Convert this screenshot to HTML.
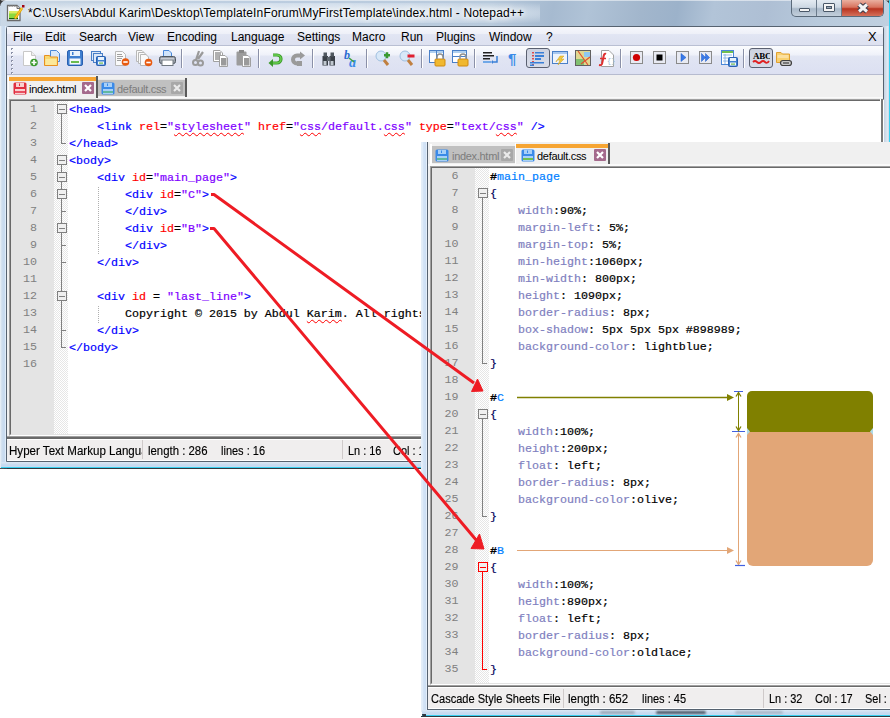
<!DOCTYPE html><html><head><meta charset="utf-8"><style>
*{margin:0;padding:0;box-sizing:border-box}
html,body{width:890px;height:718px;overflow:hidden;background:#fff;position:relative;font-family:"Liberation Sans",sans-serif}
.a{position:absolute}
.title{left:28px;top:6px;font-size:12px;letter-spacing:0.15px;color:#000;white-space:nowrap;text-shadow:0 0 5px #fff,0 0 7px #fff,0 0 9px #f4f8fc}
.menu span{position:absolute;top:3px;font-size:12px;color:#000;white-space:nowrap}
.code{font-family:"Liberation Mono",monospace;font-size:11.67px;white-space:pre;line-height:17px;color:#000;-webkit-text-stroke:0.2px}
.ln{font-family:"Liberation Mono",monospace;font-size:11.67px;color:#808080;text-align:right;line-height:17px;white-space:pre}
.t{color:#0000ff}.at{color:#ff0000}.v{color:#8000ff}
.pr{color:#8080c0}.b{font-weight:bold}.id{color:#0080ff}.op{color:#000058}
.sq{text-decoration:underline wavy #ff0000;text-decoration-thickness:1px;text-underline-offset:2px}
.checker{background-color:#f3f3f3;background-image:repeating-conic-gradient(#e6e6e6 0 25%,#ffffff 0 50%);background-size:2px 2px}
.stbg{background:#f0eeee}
.st{font-size:12.5px;color:#000;white-space:nowrap;line-height:14px;-webkit-text-stroke:0.15px;transform:scaleX(0.92);transform-origin:0 0}
.tabtxt{font-size:11px;letter-spacing:-0.3px;white-space:nowrap;line-height:13px}
</style></head><body>
<div class="a" style="left:0px;top:0px;width:6px;height:6px;background:#3a3a3a"></div>
<div class="a" style="left:883px;top:0px;width:7px;height:6px;background:#3a3a3a"></div>
<div class="a" style="left:0px;top:462px;width:6px;height:7px;background:#505050"></div>
<div class="a" style="left:0px;top:0px;width:890px;height:469px;background:#c4d4e4;border-radius:7px 7px 0 7px;border-bottom:1px solid #303840"></div>
<div class="a" style="left:1px;top:0px;width:888px;height:26px;border-radius:7px 7px 0 0;background:linear-gradient(100deg,#cad8e6 0%,#c4d3e2 10%,#bccde0 30%,#b8cadc 55%,#a6bad0 62%,#b0c3d7 66%,#a2b6cc 72%,#9cb2ca 76%,#b2c4d8 80%,#aebfd4 86%,#b8cadc 92%,#c0d0e0 100%)"></div>
<div class="a" style="left:20px;top:3px;width:520px;height:20px;background:radial-gradient(ellipse at center,rgba(240,246,252,0.75) 0%,rgba(240,246,252,0.5) 60%,rgba(240,246,252,0) 100%)"></div>
<div class="a" style="left:1px;top:0px;width:888px;height:1px;background:rgba(255,255,255,0.5);border-radius:7px 7px 0 0"></div>
<div class="a" style="left:0px;top:26px;width:6px;height:442px;background:linear-gradient(90deg,#f0f5fa 0,#d8e4f0 18%,#c8daee 50%,#cadcf0 75%,#eaf3fc 100%)"></div>
<div class="a" style="left:1px;top:462px;width:889px;height:5px;background:linear-gradient(#dde9f5,#c6daf0 60%,#c8dcf2)"></div>
<div class="a" style="left:1px;top:467px;width:889px;height:1px;background:#38d0f0"></div>
<div class="a" style="left:884px;top:26px;width:5px;height:441px;background:linear-gradient(90deg,#c5d3e3,#dfe8f2 70%,#c8d8e8)"></div>
<div class="a" style="left:889px;top:0px;width:1px;height:468px;background:#36d2f2"></div>
<svg class="a" style="left:6px;top:4px" width="20" height="18" viewBox="0 0 20 18" ><path d="M1.5 1.5 H11 L14 4.5 V16.5 H1.5 Z" fill="#fff" stroke="#6a6a6a" stroke-width="1.3"/><path d="M11 1.5 V4.5 H14" fill="#e0e0e0" stroke="#6a6a6a" stroke-width="1"/><rect x="3" y="1" width="1.5" height="1.5" fill="#777"/><rect x="5.5" y="1" width="1.5" height="1.5" fill="#777"/><rect x="8" y="1" width="1.5" height="1.5" fill="#777"/><rect x="3" y="7" width="9" height="8" fill="#8ad840"/><rect x="3" y="7" width="9" height="2.5" fill="#d8ec60"/><rect x="3" y="14" width="9" height="1.2" fill="#106010"/><path d="M9 14.5 L16 4" stroke="#e8a800" stroke-width="2.6"/><path d="M9 14.5 L16 4" stroke="#ffd040" stroke-width="1"/><rect x="16" y="1" width="2.5" height="2.5" fill="#a00010"/></svg>
<div class="a title">*C:\Users\Abdul Karim\Desktop\TemplateInForum\MyFirstTemplate\index.html - Notepad++</div>
<div class="a" style="left:791px;top:0;width:93px;height:17px;border:1px solid #5a6a7a;border-top:none;border-radius:0 0 5px 5px;overflow:hidden;background:linear-gradient(#e4ebf2,#cdd8e3 45%,#a9b9c9 55%,#c3cfdb)">
  <div class="a" style="left:50px;top:0;width:42px;height:16px;background:linear-gradient(#eab0a0,#d8735e 45%,#b83420 55%,#d5705a)"></div>
  <div class="a" style="left:24px;top:0;width:1px;height:16px;background:#6a7a8a"></div>
  <div class="a" style="left:49px;top:0;width:1px;height:16px;background:#6a7a8a"></div>
  <div class="a" style="left:7px;top:8px;width:11px;height:4px;background:#f4f4f4;border:1px solid #4a5868;border-radius:1px"></div>
  <div class="a" style="left:31px;top:3px;width:12px;height:9px;background:#f4f4f4;border:1px solid #4a5868;border-radius:1px"><div class="a" style="left:2px;top:2px;width:6px;height:3px;background:#98a6b6;border:1px solid #4a5868"></div></div>
  <svg class="a" style="left:64px;top:2px" width="14" height="13" viewBox="0 0 14 13"><path d="M3 2.5 L11 9.5 M11 2.5 L3 9.5" stroke="#3a3a48" stroke-width="5"/><path d="M3 2.5 L11 9.5 M11 2.5 L3 9.5" stroke="#f4f4f4" stroke-width="3"/></svg>
</div>
<div class="a" style="left:6px;top:26px;width:878px;height:436px;border:1px solid #566270;border-radius:3px 3px 0 0;background:#f0f0f0"></div>
<div class="a menu" style="left:7px;top:27px;width:876px;height:19px;background:linear-gradient(#f6f7fc 0%,#eef0f8 38%,#e1e5f3 42%,#dde1f0 100%);border-bottom:1px solid #b9bfd3">
<span style="left:6px">File</span>
<span style="left:38px">Edit</span>
<span style="left:72px">Search</span>
<span style="left:121px">View</span>
<span style="left:160px">Encoding</span>
<span style="left:224px">Language</span>
<span style="left:290px">Settings</span>
<span style="left:345px">Macro</span>
<span style="left:394px">Run</span>
<span style="left:429px">Plugins</span>
<span style="left:482px">Window</span>
<span style="left:539px">?</span>
<span style="left:861px;font-size:13px;top:2px">X</span>
</div>
<div class="a" style="left:7px;top:46px;width:876px;height:29px;background:linear-gradient(#fbfcfe 0%,#f0f2fa 30%,#e1e5f3 38%,#dce0f2 100%);border-bottom:1px solid #b6bbcf"></div>
<svg class="a" style="left:11px;top:48px" width="3" height="27" viewBox="0 0 3 27" ><rect x="0" y="0" width="2" height="2" fill="#8c92a8"/><rect x="1" y="1" width="1" height="1" fill="#fff"/><rect x="0" y="4" width="2" height="2" fill="#8c92a8"/><rect x="1" y="5" width="1" height="1" fill="#fff"/><rect x="0" y="8" width="2" height="2" fill="#8c92a8"/><rect x="1" y="9" width="1" height="1" fill="#fff"/><rect x="0" y="12" width="2" height="2" fill="#8c92a8"/><rect x="1" y="13" width="1" height="1" fill="#fff"/><rect x="0" y="16" width="2" height="2" fill="#8c92a8"/><rect x="1" y="17" width="1" height="1" fill="#fff"/><rect x="0" y="20" width="2" height="2" fill="#8c92a8"/><rect x="1" y="21" width="1" height="1" fill="#fff"/><rect x="0" y="24" width="2" height="2" fill="#8c92a8"/><rect x="1" y="25" width="1" height="1" fill="#fff"/></svg>
<svg class="a" style="left:22px;top:50px" width="17" height="17" viewBox="0 0 17 17" ><path d="M1.5 1.5 H9.5 L13.5 5.5 V15.5 H1.5 Z" fill="#fff" stroke="#c8c8c8"/><path d="M9.5 1.5 V5.5 H13.5" fill="#eee" stroke="#c8c8c8"/><circle cx="12" cy="12.5" r="3.8" fill="#3c9a30"/><path d="M12 10 V15 M9.5 12.5 H14.5" stroke="#fff" stroke-width="1.6"/></svg>
<svg class="a" style="left:44px;top:50px" width="17" height="17" viewBox="0 0 17 17" ><path d="M6.5 0.5 H12.5 L15.5 3.5 V11.5 H6.5 Z" fill="#d8e8fa" stroke="#4a88d8"/><path d="M0.5 5.5 H5.5 L6.5 7 H13.5 V15.5 H0.5 Z" fill="#f8d870" stroke="#e89020"/><rect x="1.5" y="9" width="11" height="6" fill="#fce89a"/></svg>
<svg class="a" style="left:67px;top:50px" width="17" height="17" viewBox="0 0 17 17" ><rect x="0.5" y="0.5" width="15" height="15" rx="1.5" fill="#3e7fd0" stroke="#2a60b0"/><rect x="3" y="1" width="10" height="5" fill="#e8f2fc"/><rect x="5" y="2" width="1.5" height="3" fill="#3e7fd0"/><rect x="2.5" y="8.5" width="11" height="6" fill="#f4f8fc"/><rect x="4" y="11" width="8" height="2" fill="#6cbc50"/></svg>
<svg class="a" style="left:91px;top:51px" width="17" height="17" viewBox="0 0 17 17" ><rect x="0.5" y="0.5" width="9" height="9" fill="#dde9f8" stroke="#4a80c8"/><rect x="2.5" y="2.5" width="9" height="9" fill="#dde9f8" stroke="#4a80c8"/><rect x="5.5" y="5.5" width="9" height="9" rx="1" fill="#3e7fd0" stroke="#2a60b0"/><rect x="7" y="6" width="6" height="3" fill="#e8f2fc"/><rect x="7" y="10.5" width="6" height="3" fill="#f4f8fc"/><rect x="8" y="11.5" width="4" height="1.2" fill="#6cbc50"/></svg>
<svg class="a" style="left:114px;top:50px" width="17" height="17" viewBox="0 0 17 17" ><path d="M1.5 1.5 H8.5 L11.5 4.5 V15.5 H1.5 Z" fill="#fafafa" stroke="#b8b8b8"/><path d="M3 4.5 H8 M3 6.5 H9 M3 8.5 H8 M3 10.5 H7" stroke="#a0a0a0" stroke-width="1"/><circle cx="11.5" cy="12" r="3.8" fill="#e85a10"/><path d="M9.3 12 H13.7" stroke="#fff" stroke-width="1.6"/></svg>
<svg class="a" style="left:136px;top:50px" width="17" height="17" viewBox="0 0 17 17" ><path d="M0.5 0.5 H6 L8.5 3 V11.5 H0.5 Z" fill="#fafafa" stroke="#b8b8b8"/><path d="M2.5 2.5 H8 L10.5 5 V13.5 H2.5 Z" fill="#fafafa" stroke="#b8b8b8"/><path d="M4.5 4.5 H10 L12.5 7 V15.5 H4.5 Z" fill="#fafafa" stroke="#b8b8b8"/><circle cx="12.5" cy="12.5" r="3.8" fill="#e85a10"/><path d="M10.3 12.5 H14.7" stroke="#fff" stroke-width="1.6"/></svg>
<svg class="a" style="left:159px;top:50px" width="17" height="17" viewBox="0 0 17 17" ><path d="M4.5 0.5 H10 L12.5 3 V7.5 H4.5 Z" fill="#d0e4fa" stroke="#4a88d8"/><rect x="0.5" y="6.5" width="16" height="7" rx="2" fill="#9aa0a8" stroke="#505860"/><rect x="3" y="10" width="11" height="5.5" fill="#fff" stroke="#707880"/><rect x="2" y="8" width="13" height="1.5" fill="#c8ccd2"/></svg>
<div class="a" style="left:181px;top:49px;width:1px;height:19px;background:#8a90a8;border-right:1px solid #fff;width:2px"></div>
<svg class="a" style="left:191px;top:50px" width="17" height="17" viewBox="0 0 17 17" ><path d="M8 1 L5 10 M12 2 L7 9" stroke="#9a9a9a" stroke-width="2.2"/><circle cx="4.5" cy="12.5" r="2.5" fill="none" stroke="#9a9a9a" stroke-width="2"/><circle cx="9.5" cy="13" r="2.5" fill="none" stroke="#9a9a9a" stroke-width="2"/></svg>
<svg class="a" style="left:213px;top:50px" width="17" height="17" viewBox="0 0 17 17" ><path d="M0.5 0.5 H7 L9.5 3 V11.5 H0.5 Z" fill="#fff" stroke="#a0a0a0"/><rect x="2" y="2" width="6" height="8" fill="#b0b0b0"/><path d="M6.5 5.5 H12 L14.5 8 V16.5 H6.5 Z" fill="#fff" stroke="#a0a0a0"/><rect x="8" y="8" width="5.5" height="7.5" fill="#9a9a9a"/></svg>
<svg class="a" style="left:236px;top:50px" width="17" height="17" viewBox="0 0 17 17" ><rect x="0.5" y="1.5" width="10" height="14" rx="1" fill="#9c9c9c"/><rect x="3" y="0" width="5" height="3" fill="#888"/><path d="M6.5 5.5 H12 L14.5 8 V16.5 H6.5 Z" fill="#fff" stroke="#a0a0a0"/><rect x="8" y="8" width="5.5" height="7.5" fill="#9a9a9a"/></svg>
<div class="a" style="left:258px;top:49px;width:1px;height:19px;background:#8a90a8;border-right:1px solid #fff;width:2px"></div>
<svg class="a" style="left:268px;top:50px" width="17" height="17" viewBox="0 0 17 17" ><path d="M5 5 H9 A4 4 0 0 1 9 13 H4" fill="none" stroke="#3a9a2a" stroke-width="3.2"/><path d="M5 5 H9 A4 4 0 0 1 9 13 H4" fill="none" stroke="#6ad050" stroke-width="1.4"/><path d="M0.5 13 L5 9 V17 Z" fill="#3a9a2a"/></svg>
<svg class="a" style="left:291px;top:50px" width="17" height="17" viewBox="0 0 17 17" ><path d="M11 5.5 H6 A4 4 0 0 0 6 13.5 H9" fill="none" stroke="#9a9a9a" stroke-width="4"/><path d="M9 1.5 L14 5.5 L9 9.5 Z" fill="#9a9a9a"/><rect x="6" y="11" width="5" height="5" fill="#9a9a9a"/></svg>
<div class="a" style="left:312px;top:49px;width:1px;height:19px;background:#8a90a8;border-right:1px solid #fff;width:2px"></div>
<svg class="a" style="left:322px;top:51px" width="14" height="17" viewBox="0 0 14 17" ><rect x="0.5" y="5" width="5.5" height="9.5" fill="#3a4048"/><rect x="7.5" y="5" width="5.5" height="9.5" fill="#3a4048"/><rect x="1.5" y="1.5" width="3.5" height="4" fill="#505860"/><rect x="8.5" y="1.5" width="3.5" height="4" fill="#505860"/><rect x="5" y="6" width="3.5" height="4" fill="#606870"/><rect x="1.5" y="10" width="3" height="4" fill="#c0c8d0"/><rect x="8.5" y="10" width="3" height="4" fill="#c0c8d0"/></svg>
<svg class="a" style="left:344px;top:50px" width="17" height="17" viewBox="0 0 17 17" ><text x="0" y="9" font-family="Liberation Serif" font-style="italic" font-weight="bold" font-size="12" fill="#2a6ad0">b</text><text x="5" y="16.5" font-family="Liberation Serif" font-style="italic" font-weight="bold" font-size="14" fill="#3a8ae8">a</text><path d="M5 8 L10 12" stroke="#40a040" stroke-width="1.6"/></svg>
<div class="a" style="left:366px;top:49px;width:1px;height:19px;background:#8a90a8;border-right:1px solid #fff;width:2px"></div>
<svg class="a" style="left:375px;top:50px" width="17" height="17" viewBox="0 0 17 17" ><circle cx="6" cy="6" r="5" fill="#d8e8f8" stroke="#a0c0e0"/><path d="M9 10 L13 15" stroke="#c08040" stroke-width="3"/><rect x="9" y="4" width="6" height="2.5" fill="#3a9a30"/><rect x="10.75" y="2.25" width="2.5" height="6" fill="#3a9a30"/></svg>
<svg class="a" style="left:399px;top:50px" width="17" height="17" viewBox="0 0 17 17" ><circle cx="6" cy="6" r="5" fill="#d8e8f8" stroke="#a0c0e0"/><path d="M9 10 L13 15" stroke="#c08040" stroke-width="3"/><rect x="8.5" y="4.5" width="7" height="3" fill="#e02030"/></svg>
<div class="a" style="left:421px;top:49px;width:1px;height:19px;background:#8a90a8;border-right:1px solid #fff;width:2px"></div>
<svg class="a" style="left:429px;top:50px" width="17" height="17" viewBox="0 0 17 17" ><rect x="0.5" y="0.5" width="14" height="12" fill="#fff" stroke="#4a80c8"/><rect x="1" y="1" width="13" height="2" fill="#b0d0f0"/><path d="M7.5 1 V12" stroke="#4a80c8"/><rect x="6" y="9" width="10" height="7" rx="1" fill="#f0b830" stroke="#d08a10"/><path d="M8 9 V7 A3 3 0 0 1 14 7 V9" fill="none" stroke="#909090" stroke-width="1.5"/></svg>
<svg class="a" style="left:452px;top:50px" width="17" height="17" viewBox="0 0 17 17" ><rect x="0.5" y="0.5" width="14" height="12" fill="#fff" stroke="#4a80c8"/><rect x="1" y="1" width="13" height="2" fill="#b0d0f0"/><path d="M1 6.5 H14" stroke="#4a80c8"/><rect x="6" y="9" width="10" height="7" rx="1" fill="#f0b830" stroke="#d08a10"/><path d="M8 9 V7 A3 3 0 0 1 14 7 V9" fill="none" stroke="#909090" stroke-width="1.5"/></svg>
<div class="a" style="left:474px;top:49px;width:1px;height:19px;background:#8a90a8;border-right:1px solid #fff;width:2px"></div>
<svg class="a" style="left:482px;top:50px" width="17" height="17" viewBox="0 0 17 17" ><rect x="1" y="2" width="9" height="1.5" fill="#202020"/><rect x="1" y="5" width="11" height="1.5" fill="#202020"/><rect x="1" y="8" width="7" height="1.5" fill="#202020"/><rect x="1" y="11" width="8" height="2" fill="#70a8e8"/><path d="M15 6 V12 H11" fill="none" stroke="#3a80d8" stroke-width="1.5"/><path d="M11 10 L9 12 L11 14 Z" fill="#3a80d8"/></svg>
<svg class="a" style="left:508px;top:50px" width="12" height="17" viewBox="0 0 12 17" ><text x="0" y="14" font-family="Liberation Sans" font-weight="bold" font-size="15" fill="#3a8ae8">¶</text></svg>
<div class="a" style="left:526px;top:48px;width:24px;height:20px;border:1px solid #5a6070;border-radius:3px;background:linear-gradient(#cdd2e0,#d8dce8)"></div>
<svg class="a" style="left:530px;top:51px" width="17" height="17" viewBox="0 0 17 17" ><path d="M3 1 V15" stroke="#e02020" stroke-dasharray="1.5 1.5" stroke-width="1.5"/><rect x="5" y="1" width="9" height="1.5" fill="#3a80d8"/><rect x="5" y="4" width="9" height="2" fill="#3a80d8"/><rect x="5" y="7" width="6" height="2" fill="#3a80d8"/><rect x="0" y="11" width="14" height="1.5" fill="#3a80d8"/><rect x="0" y="13.5" width="4" height="1.5" fill="#3a80d8"/></svg>
<svg class="a" style="left:552px;top:50px" width="17" height="17" viewBox="0 0 17 17" ><rect x="0.5" y="1.5" width="15" height="12" fill="#eef4fc" stroke="#4a80c8"/><rect x="1" y="2" width="14" height="2" fill="#a8c8f0"/><path d="M4 12 L8 6 H12 L9 9 H12 L6 15 L8 10 H5 Z" fill="#f0c840" stroke="#d0a020" stroke-width="0.5"/></svg>
<svg class="a" style="left:575px;top:50px" width="17" height="17" viewBox="0 0 17 17" ><rect x="0.5" y="0.5" width="15" height="15" fill="#e0d890" stroke="#606060"/><rect x="9" y="2" width="6" height="5" fill="#90c8f0"/><rect x="1" y="9" width="8" height="6" fill="#80c070"/><path d="M3 1 L13 15 M6 14 L15 7" stroke="#e05030" stroke-width="1.2"/></svg>
<svg class="a" style="left:598px;top:50px" width="17" height="17" viewBox="0 0 17 17" ><path d="M3.5 0.5 H11 L15.5 5 V16.5 H3.5 Z" fill="#fff" stroke="#a0a0a0"/><path d="M8 4 Q6 3 5.5 7 L4 14 Q3.5 15.5 1 15" fill="none" stroke="#e03030" stroke-width="2"/><path d="M2 8.5 H8" stroke="#e03030" stroke-width="1.5"/><text x="9" y="13" font-family="Liberation Mono" font-size="7" fill="#a0b8d0">{}</text></svg>
<div class="a" style="left:620px;top:49px;width:1px;height:19px;background:#8a90a8;border-right:1px solid #fff;width:2px"></div>
<svg class="a" style="left:630px;top:51px" width="14" height="14" viewBox="0 0 14 14" ><rect x="0.5" y="0.5" width="12" height="12" fill="#e8eaf2" stroke="#8a8a8a"/><circle cx="6.5" cy="6.5" r="3.6" fill="#d00000"/></svg>
<svg class="a" style="left:653px;top:51px" width="14" height="14" viewBox="0 0 14 14" ><rect x="0.5" y="0.5" width="12" height="12" fill="#e8eaf2" stroke="#8a8a8a"/><rect x="3.5" y="3.5" width="6" height="6" fill="#000"/></svg>
<svg class="a" style="left:676px;top:51px" width="14" height="14" viewBox="0 0 14 14" ><rect x="0.5" y="0.5" width="12" height="12" fill="#e8eaf2" stroke="#8a8a8a"/><path d="M5 2.5 L10 6.5 L5 10.5 Z" fill="#3a7ae8" stroke="#1a5ac8" stroke-width="0.5"/></svg>
<svg class="a" style="left:699px;top:51px" width="14" height="14" viewBox="0 0 14 14" ><rect x="0.5" y="0.5" width="12" height="12" fill="#e8eaf2" stroke="#8a8a8a"/><path d="M2.5 2.5 L6.5 6.5 L2.5 10.5 Z M6.5 2.5 L10.5 6.5 L6.5 10.5 Z" fill="#3a7ae8" stroke="#1a5ac8" stroke-width="0.5"/></svg>
<svg class="a" style="left:721px;top:50px" width="18" height="18" viewBox="0 0 18 18" ><rect x="0.5" y="0.5" width="12" height="14" fill="#fff" stroke="#4a88d8"/><rect x="1" y="1" width="11" height="2" fill="#70c050"/><path d="M2 5 H11 M2 8 H11 M2 11 H7 M4 4 V14" stroke="#7aa8e0" stroke-width="0.8"/><rect x="7.5" y="7.5" width="9" height="9" rx="1" fill="#3e7fd0" stroke="#2a60b0"/><rect x="9" y="8" width="6" height="3" fill="#e8f2fc"/><rect x="9" y="12.5" width="6" height="3" fill="#f4f8fc"/><rect x="10" y="13.5" width="4" height="1.2" fill="#6cbc50"/></svg>
<div class="a" style="left:743px;top:49px;width:1px;height:19px;background:#8a90a8;border-right:1px solid #fff;width:2px"></div>
<div class="a" style="left:749px;top:48px;width:24px;height:20px;border:1px solid #5a6070;border-radius:3px;background:linear-gradient(#cdd2e0,#d8dce8)"></div>
<svg class="a" style="left:752px;top:51px" width="18" height="14" viewBox="0 0 18 14" ><text x="1" y="8" font-family="Liberation Serif" font-weight="bold" font-size="9" fill="#000" letter-spacing="-0.3">ABC</text><path d="M1 11 Q3 9 5 11 T9 11 T13 11 T17 10" fill="none" stroke="#e02020" stroke-width="1.8"/></svg>
<svg class="a" style="left:776px;top:50px" width="17" height="17" viewBox="0 0 17 17" ><path d="M0.5 2.5 H5 L6.5 4 H13.5 V12.5 H0.5 Z" fill="#f8d070" stroke="#e0a030"/><rect x="1.5" y="5" width="11" height="3" fill="#fbe0a0"/><rect x="4.5" y="10.5" width="11" height="5" rx="2.5" fill="#c8c8c8" stroke="#404040" stroke-width="1.2"/><path d="M7 13 H13" stroke="#404040" stroke-width="1.2"/></svg>
<div class="a" style="left:7px;top:75px;width:876px;height:24px;background:#f0f0f0"></div>
<div class="a" style="left:7px;top:97px;width:876px;height:1px;background:#fafafa"></div>
<div class="a" style="left:8px;top:76px;width:89px;height:23px;background:#f0f0f0;border-left:1px solid #fff;border-right:1px solid #fff"></div>
<div class="a" style="left:96px;top:76px;width:2px;height:22px;background:#5a5a5a"></div>
<div class="a" style="left:9px;top:77px;width:87px;height:4px;background:#f6a533"></div>
<svg class="a" style="left:13px;top:82px" width="14" height="13" viewBox="0 0 14 13" ><rect x="0.5" y="0.5" width="13" height="12" rx="1.5" fill="#e03040"/><rect x="3" y="1" width="8" height="4" fill="#f8d0d0"/><rect x="6" y="1.5" width="1" height="2.5" fill="#e03040"/><rect x="2" y="7" width="10" height="5" fill="#f8d0d0"/><rect x="2" y="9" width="10" height="2" fill="#e85060"/></svg>
<div class="a tabtxt" style="left:29px;top:83px;color:#000">index.html</div>
<svg class="a" style="left:82px;top:82px" width="12" height="12" viewBox="0 0 12 12" ><rect x="0" y="0" width="12" height="12" rx="1" fill="#a46a8c"/><path d="M3 3 L9 9 M9 3 L3 9" stroke="#fff" stroke-width="2.2"/></svg>
<div class="a" style="left:98px;top:79px;width:88px;height:17px;background:#c0c0c0;border-top:1px solid #e8e8e8"></div>
<div class="a" style="left:185px;top:78px;width:2px;height:19px;background:#5a5a5a"></div>
<svg class="a" style="left:101px;top:82px" width="14" height="13" viewBox="0 0 14 13" ><rect x="0.5" y="0.5" width="13" height="12" rx="1.5" fill="#3a8ae8"/><rect x="3" y="1" width="8" height="4" fill="#a8d0f8"/><rect x="6" y="1.5" width="1" height="2.5" fill="#3a8ae8"/><rect x="2" y="7" width="10" height="5" fill="#a8d0f8"/><rect x="2" y="9" width="10" height="2" fill="#60b8a0"/></svg>
<div class="a tabtxt" style="left:117px;top:83px;color:#7c7c7c">default.css</div>
<svg class="a" style="left:171px;top:82px" width="12" height="12" viewBox="0 0 12 12" ><rect x="0" y="0" width="12" height="12" rx="1" fill="#a8a8a8"/><path d="M3 3 L9 9 M9 3 L3 9" stroke="#eaeaea" stroke-width="2.2"/></svg>
<div class="a" style="left:9px;top:99px;width:875px;height:337px;background:#fff;border-top:1px solid #a0a0a0;border-left:1px solid #a0a0a0;border-bottom:1px solid #fff"></div>
<div class="a" style="left:10px;top:100px;width:871px;height:335px;border-top:1px solid #696969;border-left:1px solid #696969;border-bottom:1px solid #e3e3e3"></div>
<div class="a" style="left:880px;top:99px;width:1px;height:337px;background:#fff"></div>
<div class="a" style="left:881px;top:99px;width:2px;height:337px;background:#7a7a7a"></div>
<div class="a" style="left:11px;top:101px;width:43px;height:333px;background:#e4e4e4"></div>
<div class="a checker" style="left:54px;top:101px;width:14px;height:333px"></div>
<div class="a ln" style="left:11px;top:101px;width:26px">1
2
3
4
5
6
7
8
9
10
11
12
13
14
15
16</div>
<svg class="a" style="left:54px;top:101px" width="14" height="333" viewBox="0 0 14 333" shape-rendering="crispEdges"><path d="M7.5 12 V17" stroke="#808080"/><rect x="3.5" y="3.5" width="9" height="9" fill="#f0f0f0" stroke="#808080"/><path d="M5 8 H11" stroke="#808080" stroke-width="1"/><path d="M7.5 17 V34" stroke="#808080"/><path d="M7.5 34 V42.5 H12" stroke="#808080" fill="none"/><path d="M7.5 64 V68" stroke="#808080"/><rect x="3.5" y="54.5" width="9" height="9" fill="#f0f0f0" stroke="#808080"/><path d="M5 59 H11" stroke="#808080" stroke-width="1"/><path d="M7.5 68 V85" stroke="#808080"/><path d="M7.5 80 V85" stroke="#808080"/><rect x="3.5" y="71.5" width="9" height="9" fill="#f0f0f0" stroke="#808080"/><path d="M5 76 H11" stroke="#808080" stroke-width="1"/><path d="M7.5 85 V102" stroke="#808080"/><path d="M7.5 97 V102" stroke="#808080"/><rect x="3.5" y="88.5" width="9" height="9" fill="#f0f0f0" stroke="#808080"/><path d="M5 93 H11" stroke="#808080" stroke-width="1"/><path d="M7.5 102 V119 M7.5 110 H12" stroke="#808080"/><path d="M7.5 119 V136" stroke="#808080"/><path d="M7.5 131 V136" stroke="#808080"/><rect x="3.5" y="122.5" width="9" height="9" fill="#f0f0f0" stroke="#808080"/><path d="M5 127 H11" stroke="#808080" stroke-width="1"/><path d="M7.5 136 V153 M7.5 144 H12" stroke="#808080"/><path d="M7.5 153 V170 M7.5 161 H12" stroke="#808080"/><path d="M7.5 170 V187" stroke="#808080"/><path d="M7.5 187 V204" stroke="#808080"/><path d="M7.5 199 V204" stroke="#808080"/><rect x="3.5" y="190.5" width="9" height="9" fill="#f0f0f0" stroke="#808080"/><path d="M5 195 H11" stroke="#808080" stroke-width="1"/><path d="M7.5 204 V221" stroke="#808080"/><path d="M7.5 221 V238 M7.5 229 H12" stroke="#808080"/><path d="M7.5 238 V246.5 H12" stroke="#808080" fill="none"/></svg>
<div class="a" style="left:98px;top:187px;width:1px;height:68px;background:repeating-linear-gradient(#b0b0b0 0 1px,transparent 1px 2px)"></div>
<div class="a" style="left:98px;top:306px;width:1px;height:17px;background:repeating-linear-gradient(#b0b0b0 0 1px,transparent 1px 2px)"></div>
<div class="a" style="left:68px;top:101px;width:812px;height:333px;overflow:hidden"><div class="a code" style="left:1px;top:1px"><span class="t">&lt;head&gt;</span>
    <span class="t">&lt;link </span><span class="at">rel</span>=<span class="v">"<span class="sq">stylesheet</span>"</span> <span class="at">href</span>=<span class="v">"<span class="sq">css</span>/default.<span class="sq">css</span>"</span> <span class="at">type</span>=<span class="v">"text/<span class="sq">css</span>"</span> <span class="t">/&gt;</span>
<span class="t">&lt;/head&gt;</span>
<span class="t">&lt;body&gt;</span>
    <span class="t">&lt;div </span><span class="at">id</span>=<span class="v">"main_page"</span><span class="t">&gt;</span>
        <span class="t">&lt;div </span><span class="at">id</span>=<span class="v">"C"</span><span class="t">&gt;</span>
        <span class="t">&lt;/div&gt;</span>
        <span class="t">&lt;div </span><span class="at">id</span>=<span class="v">"B"</span><span class="t">&gt;</span>
        <span class="t">&lt;/div&gt;</span>
    <span class="t">&lt;/div&gt;</span>

    <span class="t">&lt;div </span><span class="at">id</span> = <span class="v">"last_line"</span><span class="t">&gt;</span>
        Copyright © 2015 by Abdul <span class="sq">Karim</span>. All rights reserved.
    <span class="t">&lt;/div&gt;</span>
<span class="t">&lt;/body&gt;</span>
</div></div>
<div class="a" style="left:7px;top:436px;width:876px;height:25px;background:#f0eeee;border-top:1px solid #a0a0a0"></div>
<div class="a" style="left:7px;top:437px;width:876px;height:2px;background:#6a6a6a"></div>
<div class="a" style="left:7px;top:439px;width:876px;height:1px;background:#fff"></div>
<div class="a" style="left:7px;top:460px;width:876px;height:1px;background:#fff"></div>
<div class="a" style="left:142px;top:440px;width:1px;height:19px;background:#cfcaca"></div>
<div class="a" style="left:342px;top:440px;width:1px;height:19px;background:#cfcaca"></div>
<div class="a" style="left:8px;top:440px;width:134px;height:18px;overflow:hidden">
<div class="a st" style="left:1px;top:4px;transform:scaleX(0.925)">Hyper Text Markup Language file</div></div>
<div class="a st" style="left:147.5px;top:444px;transform:scaleX(0.91)">length : 286</div>
<div class="a st" style="left:221px;top:444px;transform:scaleX(0.88)">lines : 16</div>
<div class="a st" style="left:347.5px;top:444px;transform:scaleX(0.875)">Ln : 16</div>
<div class="a st" style="left:393px;top:444px;transform:scaleX(0.875)">Col : 1</div>
<div class="a" style="left:421px;top:142px;width:1px;height:570px;background:#e4eef8"></div>
<div class="a" style="left:422px;top:142px;width:5px;height:574px;background:linear-gradient(90deg,#e6f0fa,#d4e4f6 30%,#cfe0f4 70%,#eef6fe)"></div>
<div class="a" style="left:427px;top:142px;width:1px;height:568px;background:#566270"></div>
<div class="a" style="left:422px;top:710px;width:468px;height:5px;background:linear-gradient(#dde9f5,#c6daf0 60%,#c8dcf2)"></div>
<div class="a" style="left:656px;top:711px;width:50px;height:3px;background:#4a5866;border-radius:2px;filter:blur(1px)"></div>
<div class="a" style="left:600px;top:711px;width:35px;height:3px;background:#9aaab8;border-radius:2px;filter:blur(1px)"></div>
<div class="a" style="left:735px;top:711px;width:48px;height:3px;background:#a8b8c8;border-radius:2px;filter:blur(1px)"></div>
<div class="a" style="left:422px;top:715px;width:468px;height:1px;background:#38d0f0"></div>
<div class="a" style="left:421px;top:716px;width:469px;height:1px;background:#303840"></div>
<div class="a" style="left:422px;top:714px;width:4px;height:3px;background:#303840;border-radius:0 0 0 3px"></div>
<div class="a" style="left:428px;top:142px;width:462px;height:568px;background:#f0f0f0"></div>
<div class="a" style="left:430px;top:144px;width:2px;height:21px;background:#fff"></div>
<div class="a" style="left:432px;top:146px;width:83px;height:17px;background:#c0c0c0"></div>
<svg class="a" style="left:435px;top:149px" width="14" height="13" viewBox="0 0 14 13" ><rect x="0.5" y="0.5" width="13" height="12" rx="1.5" fill="#3a8ae8"/><rect x="3" y="1" width="8" height="4" fill="#a8d0f8"/><rect x="6" y="1.5" width="1" height="2.5" fill="#3a8ae8"/><rect x="2" y="7" width="10" height="5" fill="#a8d0f8"/><rect x="2" y="9" width="10" height="2" fill="#60b8a0"/></svg>
<div class="a tabtxt" style="left:452px;top:150px;color:#7c7c7c">index.html</div>
<svg class="a" style="left:501px;top:149px" width="12" height="12" viewBox="0 0 12 12" ><rect x="0" y="0" width="12" height="12" rx="1" fill="#a8a8a8"/><path d="M3 3 L9 9 M9 3 L3 9" stroke="#eaeaea" stroke-width="2.2"/></svg>
<div class="a" style="left:515px;top:143px;width:93px;height:22px;background:#f0f0f0;border-left:1px solid #fff"></div>
<div class="a" style="left:608px;top:143px;width:2px;height:21px;background:#5a5a5a"></div>
<div class="a" style="left:516px;top:144px;width:92px;height:4px;background:#f6a533"></div>
<svg class="a" style="left:521px;top:149px" width="14" height="13" viewBox="0 0 14 13" ><rect x="0.5" y="0.5" width="13" height="12" rx="1.5" fill="#3a8ae8"/><rect x="3" y="1" width="8" height="4" fill="#a8d0f8"/><rect x="6" y="1.5" width="1" height="2.5" fill="#3a8ae8"/><rect x="2" y="7" width="10" height="5" fill="#a8d0f8"/><rect x="2" y="9" width="10" height="2" fill="#70c050"/></svg>
<div class="a tabtxt" style="left:537px;top:150px;color:#000">default.css</div>
<svg class="a" style="left:594px;top:149px" width="12" height="12" viewBox="0 0 12 12" ><rect x="0" y="0" width="12" height="12" rx="1" fill="#a46a8c"/><path d="M3 3 L9 9 M9 3 L3 9" stroke="#fff" stroke-width="2.2"/></svg>
<div class="a" style="left:428px;top:164px;width:462px;height:2px;background:#fafafa"></div>
<div class="a" style="left:430px;top:166px;width:460px;height:519px;background:#fff;border-top:1px solid #a0a0a0;border-left:1px solid #a0a0a0;border-bottom:1px solid #fff"></div>
<div class="a" style="left:431px;top:167px;width:459px;height:517px;border-top:1px solid #696969;border-left:1px solid #696969;border-bottom:1px solid #e3e3e3"></div>
<div class="a" style="left:432px;top:168px;width:43px;height:515px;background:#e4e4e4"></div>
<div class="a checker" style="left:475px;top:168px;width:14px;height:515px"></div>
<div class="a ln" style="left:432px;top:168px;width:26.5px;height:515px;overflow:hidden">6
7
8
9
10
11
12
13
14
15
16
17
18
19
20
21
22
23
24
25
26
27
28
29
30
31
32
33
34
35</div>
<svg class="a" style="left:475px;top:168px" width="14" height="515" viewBox="0 0 14 515" shape-rendering="crispEdges"><path d="M7.5 29 V34" stroke="#808080"/><rect x="3.5" y="20.5" width="9" height="9" fill="#f0f0f0" stroke="#808080"/><path d="M5 25 H11" stroke="#808080" stroke-width="1"/><path d="M7.5 34 V51" stroke="#808080"/><path d="M7.5 51 V68" stroke="#808080"/><path d="M7.5 68 V85" stroke="#808080"/><path d="M7.5 85 V102" stroke="#808080"/><path d="M7.5 102 V119" stroke="#808080"/><path d="M7.5 119 V136" stroke="#808080"/><path d="M7.5 136 V153" stroke="#808080"/><path d="M7.5 153 V170" stroke="#808080"/><path d="M7.5 170 V187" stroke="#808080"/><path d="M7.5 187 V195.5 H12" stroke="#808080" fill="none"/><path d="M7.5 250 V255" stroke="#808080"/><rect x="3.5" y="241.5" width="9" height="9" fill="#f0f0f0" stroke="#808080"/><path d="M5 246 H11" stroke="#808080" stroke-width="1"/><path d="M7.5 255 V272" stroke="#808080"/><path d="M7.5 272 V289" stroke="#808080"/><path d="M7.5 289 V306" stroke="#808080"/><path d="M7.5 306 V323" stroke="#808080"/><path d="M7.5 323 V340" stroke="#808080"/><path d="M7.5 340 V348.5 H12" stroke="#808080" fill="none"/><path d="M7.5 403 V408" stroke="#ff0000"/><rect x="3.5" y="394.5" width="9" height="9" fill="#f0f0f0" stroke="#ff0000"/><path d="M5 399 H11" stroke="#ff0000" stroke-width="1"/><path d="M7.5 408 V425" stroke="#ff0000"/><path d="M7.5 425 V442" stroke="#ff0000"/><path d="M7.5 442 V459" stroke="#ff0000"/><path d="M7.5 459 V476" stroke="#ff0000"/><path d="M7.5 476 V493" stroke="#ff0000"/><path d="M7.5 493 V501.5 H12" stroke="#ff0000" fill="none"/></svg>
<div class="a" style="left:489px;top:168px;width:401px;height:515px;overflow:hidden"><div class="a code" style="left:1px;top:1px"><span class="b">#</span><span class="id">main_page</span>
<span class="op">{</span>
    <span class="pr">width</span>:90%;
    <span class="pr">margin-left</span>: 5%;
    <span class="pr">margin-top</span>: 5%;
    <span class="pr">min-height</span>:1060px;
    <span class="pr">min-width</span>: 800px;
    <span class="pr">height</span>: 1090px;
    <span class="pr">border-radius</span>: 8px;
    <span class="pr">box-shadow</span>: 5px 5px 5px #898989;
    <span class="pr">background-color</span>: lightblue;
<span class="op">}</span>

<span class="b">#</span><span class="id">C</span>
<span class="op">{</span>
    <span class="pr">width</span>:100%;
    <span class="pr">height</span>:200px;
    <span class="pr">float</span>: left;
    <span class="pr">border-radius</span>: 8px;
    <span class="pr">background-color</span>:olive;
<span class="op">}</span>

<span class="b">#</span><span class="id">B</span>
<span class="op">{</span>
    <span class="pr">width</span>:100%;
    <span class="pr">height</span>:890px;
    <span class="pr">float</span>: left;
    <span class="pr">border-radius</span>: 8px;
    <span class="pr">background-color</span>:oldlace;
<span class="op">}</span></div></div>
<div class="a" style="left:428px;top:685px;width:462px;height:24px;background:#f0eeee;border-top:1px solid #a0a0a0"></div>
<div class="a" style="left:428px;top:686px;width:462px;height:1px;background:#6a6a6a"></div>
<div class="a" style="left:428px;top:687px;width:462px;height:1px;background:#fff"></div>
<div class="a" style="left:428px;top:708px;width:462px;height:1px;background:#fff"></div>
<div class="a" style="left:428px;top:709px;width:462px;height:1px;background:#566270"></div>
<div class="a" style="left:563px;top:689px;width:1px;height:19px;background:#cfcaca"></div>
<div class="a" style="left:763px;top:689px;width:1px;height:19px;background:#cfcaca"></div>
<div class="a st" style="left:430.5px;top:692px;transform:scaleX(0.885)">Cascade Style Sheets File</div>
<div class="a st" style="left:568px;top:692px;transform:scaleX(0.92)">length : 652</div>
<div class="a st" style="left:641.5px;top:692px;transform:scaleX(0.88)">lines : 45</div>
<div class="a st" style="left:768.5px;top:692px;transform:scaleX(0.875)">Ln : 32</div>
<div class="a st" style="left:814.5px;top:692px;transform:scaleX(0.875)">Col : 17</div>
<div class="a st" style="left:865px;top:692px;transform:scaleX(0.875)">Sel : 0 | 0</div>
<svg class="a" style="left:0;top:0" width="890" height="718" viewBox="0 0 890 718"><path d="M211 194.5 H214 L474 383" fill="none" stroke="#ee1c24" stroke-width="3" stroke-linejoin="round"/><path d="M483 391 L477.5 379 L471.5 391.5 Z" fill="#ee1c24" stroke="#ee1c24" stroke-width="1"/><path d="M210 228.5 H214 L477 541" fill="none" stroke="#ee1c24" stroke-width="3" stroke-linejoin="round"/><path d="M484 549 L479.5 534 L471 548.5 Z" fill="#ee1c24" stroke="#ee1c24" stroke-width="1"/><path d="M517 397.5 H728" stroke="#808000" stroke-width="1.3"/><path d="M734 397.5 L727 394 V401 Z" fill="#808000"/><path d="M517 550.5 H728" stroke="#e2a677" stroke-width="1.2"/><path d="M734 550.5 L727 547 V554 Z" fill="#e2a677"/><rect x="747" y="426" width="126" height="12" fill="#add8e6"/><rect x="747" y="391" width="126" height="41" rx="5" fill="#808000"/><rect x="747" y="432" width="126" height="134" rx="6" fill="#e2a677"/><rect x="747" y="426" width="126" height="6" fill="#808000"/><rect x="747" y="432" width="126" height="6" fill="#e2a677"/><path d="M747 428 L750 431.5 L747 435 Z" fill="#add8e6"/><path d="M873 428 L870 431.5 L873 435 Z" fill="#add8e6"/><path d="M734 391.5 H743 M732 431.5 H745" stroke="#4060e0" stroke-width="1.2"/><path d="M738.5 393 V430" stroke="#808000" stroke-width="1"/><path d="M736 396.5 L738.5 392.5 L741 396.5 M736 426.5 L738.5 430.5 L741 426.5" fill="none" stroke="#808000" stroke-width="1.3"/><path d="M738.5 434 V564" stroke="#e2a677" stroke-width="1"/><path d="M736 437.5 L738.5 433.5 L741 437.5 M736 560.5 L738.5 564.5 L741 560.5" fill="none" stroke="#e2a677" stroke-width="1.3"/><path d="M735 565.5 H745" stroke="#4060e0" stroke-width="1.2"/></svg>
</body></html>
